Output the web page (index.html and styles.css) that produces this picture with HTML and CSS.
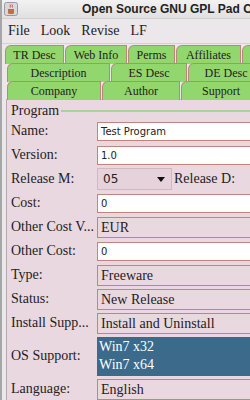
FILE: index.html
```html
<!DOCTYPE html>
<html>
<head>
    <title>Open Source GNU GPL Pad Creator</title>
    <link rel="stylesheet" href="styles.css">
</head>
<body>
    <div class="window">
        <div class="titlebar">
            <span class="app-icon">
                <svg width="14" height="14" viewBox="0 0 14 14">
                    <rect x="0.5" y="0.5" width="13" height="13" rx="2" fill="#d8d8dc" stroke="#9a9aa4"/>
                    <path d="M4 7h6v3.5a1.5 1.5 0 0 1-1.5 1.5h-3A1.5 1.5 0 0 1 4 10.5z" fill="#c86a4a"/>
                    <path d="M6 2.5c1 1 -0.5 2 0.5 3M8 2.5c1 1 -0.5 2 0.5 3" stroke="#d04a3a" fill="none"/>
                </svg>
            </span>
            <span class="title">Open Source GNU GPL Pad Creator</span>
        </div>

        <div class="menubar">
            <span>File</span>
            <span>Look</span>
            <span>Revise</span>
            <span>LF</span>
        </div>

        <!-- tab runs, back row first -->
        <div class="tabs">
            <div class="tab-row first">
                <div class="tab" style="width:59px">TR Desc</div>
                <div class="tab" style="width:62px">Web Info</div>
                <div class="tab" style="width:47px">Perms</div>
                <div class="tab" style="width:65px">Affiliates</div>
                <div class="tab" style="width:60px">About</div>
            </div>
            <div class="tab-row">
                <div class="tab" style="width:103px">Description</div>
                <div class="tab" style="width:76px">ES Desc</div>
                <div class="tab" style="width:76px">DE Desc</div>
            </div>
            <div class="tab-row">
                <div class="tab" style="width:94px">Company</div>
                <div class="tab" style="width:78px">Author</div>
                <div class="tab" style="width:80px">Support</div>
            </div>
        </div>

        <div class="panel">
            <div class="group-title"><span>Program</span></div>

            <div class="form">
                <label>Name:</label>
                <div class="field text">Test Program</div>

                <label>Version:</label>
                <div class="field text">1.0</div>

                <label>Release M:</label>
                <div class="split">
                    <div class="combo">05 <span class="arrow"></span></div>
                    <label>Release D:</label>
                </div>

                <label>Cost:</label>
                <div class="field text">0</div>

                <label>Other Cost V...</label>
                <div class="field choice">EUR</div>

                <label>Other Cost:</label>
                <div class="field text">0</div>

                <label>Type:</label>
                <div class="field choice">Freeware</div>

                <label>Status:</label>
                <div class="field choice">New Release</div>

                <label>Install Supp...</label>
                <div class="field choice">Install and Uninstall</div>

                <label>OS Support:</label>
                <div class="list">
                    <div>Win7 x32</div>
                    <div>Win7 x64</div>
                </div>

                <label>Language:</label>
                <div class="field choice">English</div>
            </div>
        </div>
    </div>
</body>
</html>
```

FILE: styles.css
```css
:root {
    --frame: #ebe7ea;
    --panel: #ead8e0;
    --tab: #92d66e;
    --tab-edge: #b58a7a;
    --field-edge: #c98080;
    --list-bg: #3b6a8b;
}

body {
    margin: 0;
    overflow: hidden;
    background-color: var(--frame);
    font-family: "Liberation Serif", serif;
    color: #222;
}

.window {
    width: 330px;
    height: 400px;
    overflow: hidden;
    border-left: 2px solid #a6a6a6;
    background-color: var(--frame);
}

.titlebar {
    height: 18px;
    display: flex;
    align-items: center;
    background: linear-gradient(#f2f2f2, #e0e0e0);
    border-bottom: 1px solid #cfcfcf;
}

.app-icon {
    display: flex;
    margin-left: 2px;
}

.title {
    margin-left: 64px;
    font-family: "Liberation Sans", sans-serif;
    font-weight: bold;
    font-size: 12px;
    white-space: nowrap;
    color: #222;
}

.menubar {
    height: 24px;
    display: flex;
    align-items: center;
    gap: 11px;
    padding-left: 6px;
    font-size: 14px;
    border-bottom: 1px solid #d8d0d4;
}

.tabs {
    padding-top: 1px;
}

.tab-row {
    display: flex;
    padding-left: 5px;
    height: 18px;
}

.tab-row.first {
    padding-left: 3px;
}

.tab {
    flex: none;
    box-sizing: border-box;
    height: 19px;
    margin-right: 1px;
    background-color: var(--tab);
    border: 1px solid var(--tab-edge);
    border-bottom: none;
    border-top-left-radius: 6px;
    text-align: center;
    font-size: 12px;
    line-height: 18px;
    white-space: nowrap;
}

.panel {
    margin-left: 4px;
    padding: 3px 0 0 4px;
    height: 320px;
    background-color: var(--panel);
    border-top: 1px solid #d0c0c8;
    border-left: 1px solid #b7aab0;
}

.group-title {
    height: 16px;
    display: flex;
    align-items: center;
    font-size: 14px;
}

.group-title::after {
    content: "";
    flex: 1;
    margin-left: 2px;
    border-top: 2px solid #a8d49a;
}

.form {
    display: grid;
    grid-template-columns: 86px 1fr;
    grid-template-rows: repeat(9, 24px) 42px 24px;
    align-items: center;
    font-size: 14px;
}

.form label {
    white-space: nowrap;
}

.field {
    box-sizing: border-box;
    padding-left: 3px;
    border: 1px solid var(--field-edge);
    white-space: nowrap;
}

.field.text {
    height: 19px;
    background-color: #fff;
    font-family: "DejaVu Sans", sans-serif;
    font-size: 10px;
    line-height: 17px;
}

.field.choice {
    height: 21px;
    background-color: var(--panel);
    font-size: 14px;
    line-height: 19px;
}

.split {
    display: flex;
    align-items: center;
    gap: 2px;
}

.combo {
    box-sizing: border-box;
    width: 75px;
    height: 22px;
    display: flex;
    align-items: center;
    padding-left: 5px;
    border: 1px solid #d4b6c0;
    background-color: #e5d2da;
    font-family: "DejaVu Sans", sans-serif;
    font-size: 12px;
}

.arrow {
    margin-left: auto;
    margin-right: 6px;
    border-left: 4px solid transparent;
    border-right: 4px solid transparent;
    border-top: 5px solid #111;
}

.list {
    box-sizing: border-box;
    height: 39px;
    padding: 1px 0 0 2px;
    background-color: var(--list-bg);
    color: #fff;
    font-size: 14px;
    line-height: 18px;
}
```
